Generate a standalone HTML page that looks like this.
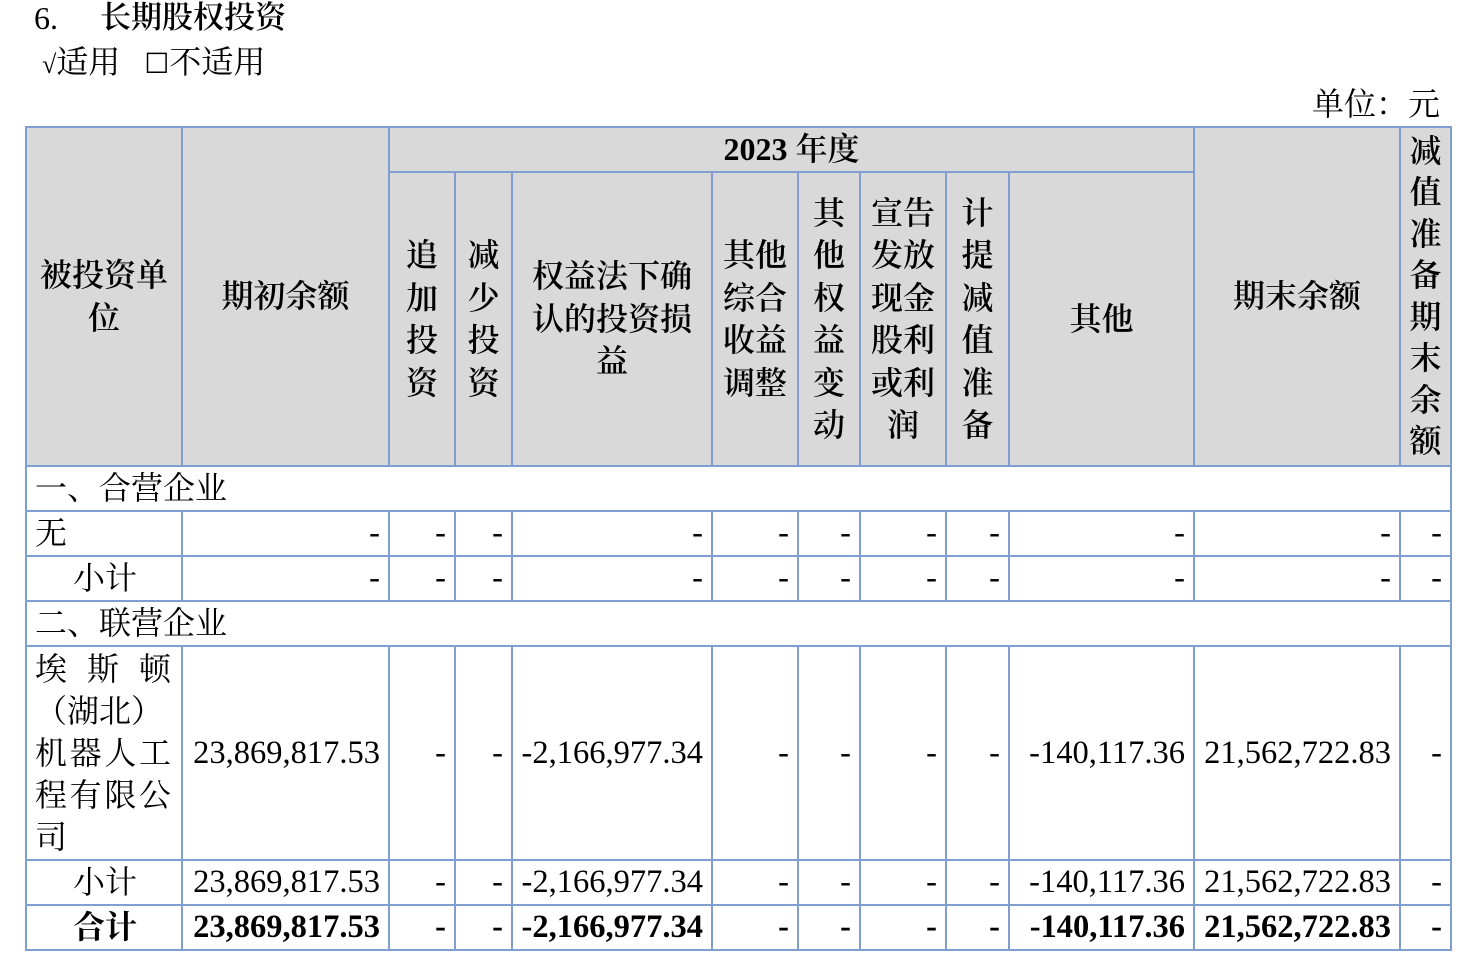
<!DOCTYPE html>
<html><head><meta charset="utf-8"><style>
body{margin:0;width:1474px;height:972px;background:#fff;position:relative;font-family:"Liberation Serif","Noto Serif CJK SC",serif;color:#000;overflow:hidden}
.t{position:absolute;font-size:32px;line-height:36px;white-space:nowrap}
table{position:absolute;left:25px;top:126px;border-collapse:collapse;table-layout:fixed}
td{border:2px solid #7f9fd0;padding:0;font-size:32px;line-height:42.5px;vertical-align:middle}
.h{background:#d9d9d9;text-align:center;font-weight:600;font-size:32px}
.n{text-align:right;padding-right:8px;white-space:nowrap;font-size:32.5px}
.l{text-align:left;padding-left:8px}
.b{font-weight:bold}
.sp{display:flex;justify-content:space-between;width:136px}
</style></head><body>
<div class="t" style="left:34px;top:0">6.</div>
<div class="t" style="left:100px;top:0;font-weight:600;font-size:31px">长期股权投资</div>
<div class="t" style="left:42px;top:44px"><span style="font-size:26px">√</span>适用&nbsp;&nbsp;&nbsp;<span style="font-size:28px">☐</span>不适用</div>
<div class="t" style="right:34px;top:86px">单位：元</div>
<table>
<colgroup><col style="width:156px"><col style="width:207px"><col style="width:66px"><col style="width:57px"><col style="width:200px"><col style="width:86px"><col style="width:62px"><col style="width:86px"><col style="width:63px"><col style="width:185px"><col style="width:206px"><col style="width:51px"></colgroup>
<tr style="height:45px"><td class="h" rowspan="2">被投资单<br>位</td><td class="h" rowspan="2">期初余额</td><td class="h" colspan="8">2023 年度</td><td class="h" rowspan="2">期末余额</td><td class="h" rowspan="2" style="line-height:41.5px">减<br>值<br>准<br>备<br>期<br>末<br>余<br>额</td></tr>
<tr style="height:294px"><td class="h">追<br>加<br>投<br>资</td><td class="h">减<br>少<br>投<br>资</td><td class="h">权益法下确<br>认的投资损<br>益</td><td class="h">其他<br>综合<br>收益<br>调整</td><td class="h">其<br>他<br>权<br>益<br>变<br>动</td><td class="h">宣告<br>发放<br>现金<br>股利<br>或利<br>润</td><td class="h">计<br>提<br>减<br>值<br>准<br>备</td><td class="h">其他</td></tr>
<tr style="height:45px"><td colspan="12" class="l">一、合营企业</td></tr>
<tr style="height:45px"><td class="l">无</td><td class="n">-</td><td class="n">-</td><td class="n">-</td><td class="n">-</td><td class="n">-</td><td class="n">-</td><td class="n">-</td><td class="n">-</td><td class="n">-</td><td class="n">-</td><td class="n">-</td></tr>
<tr style="height:45px"><td class="l" style="padding-left:46px">小计</td><td class="n">-</td><td class="n">-</td><td class="n">-</td><td class="n">-</td><td class="n">-</td><td class="n">-</td><td class="n">-</td><td class="n">-</td><td class="n">-</td><td class="n">-</td><td class="n">-</td></tr>
<tr style="height:45px"><td colspan="12" class="l">二、联营企业</td></tr>
<tr style="height:214px"><td class="l" style="line-height:42px"><div class="sp"><span>埃</span><span>斯</span><span>顿</span></div><div class="sp"><span>（湖北）</span></div><div class="sp"><span>机</span><span>器</span><span>人</span><span>工</span></div><div class="sp"><span>程</span><span>有</span><span>限</span><span>公</span></div><div>司</div></td><td class="n">23,869,817.53</td><td class="n">-</td><td class="n">-</td><td class="n">-2,166,977.34</td><td class="n">-</td><td class="n">-</td><td class="n">-</td><td class="n">-</td><td class="n">-140,117.36</td><td class="n">21,562,722.83</td><td class="n">-</td></tr>
<tr style="height:45px"><td class="l" style="padding-left:46px">小计</td><td class="n">23,869,817.53</td><td class="n">-</td><td class="n">-</td><td class="n">-2,166,977.34</td><td class="n">-</td><td class="n">-</td><td class="n">-</td><td class="n">-</td><td class="n">-140,117.36</td><td class="n">21,562,722.83</td><td class="n">-</td></tr>
<tr style="height:45px" class="b"><td class="l" style="padding-left:46px">合计</td><td class="n">23,869,817.53</td><td class="n">-</td><td class="n">-</td><td class="n">-2,166,977.34</td><td class="n">-</td><td class="n">-</td><td class="n">-</td><td class="n">-</td><td class="n">-140,117.36</td><td class="n">21,562,722.83</td><td class="n">-</td></tr>
</table>
</body></html>
